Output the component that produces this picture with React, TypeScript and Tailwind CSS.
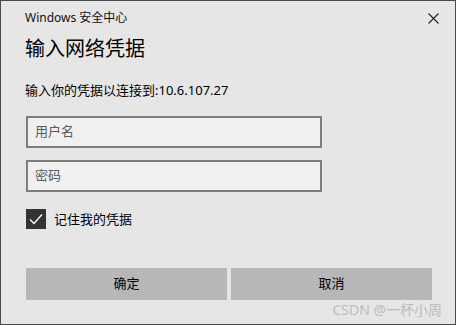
export default function App() {
  const font = { fontFamily: '"Noto Sans", "Noto Sans CJK SC", sans-serif' };
  return (
    <div
      className="relative w-[456px] h-[325px] bg-[#e6e6e6] border border-[#4a4a4a] text-black flex flex-col"
      style={font}
    >
      {/* Title bar */}
      <div className="flex items-center justify-between pl-[24px] pr-[16px] pt-[7px] h-[26px]">
        <span className="text-[12px] leading-[16px] text-[#111]">Windows 安全中心</span>
        <svg width="11" height="11" viewBox="0 0 11 11" fill="none" className="mt-[2px]">
          <path d="M0.5 0.5 L10.5 10.5 M10.5 0.5 L0.5 10.5" stroke="#222" strokeWidth="1.1" />
        </svg>
      </div>

      {/* Heading */}
      <div className="pl-[24px] mt-[8px] text-[20px] leading-[28px]">输入网络凭据</div>

      <div className="pl-[24px] mt-[18px] text-[13px] leading-[18px]">输入你的凭据以连接到:10.6.107.27</div>

      {/* Inputs */}
      <div className="pl-[25px] mt-[17px] flex flex-col gap-[12px]">
        <div className="w-[296px] h-[32px] bg-[#f0f0f0] border-2 border-[#7d7d7d] flex items-center pl-[7px] text-[13px] text-[#5a5a5a]">
          用户名
        </div>
        <div className="w-[296px] h-[32px] bg-[#f0f0f0] border-2 border-[#7d7d7d] flex items-center pl-[7px] text-[13px] text-[#5a5a5a]">
          密码
        </div>
      </div>

      {/* Remember */}
      <div className="pl-[25px] mt-[17px] flex items-center gap-[8px]">
        <div className="w-[20px] h-[20px] bg-[#333] flex items-center justify-center">
          <svg width="16" height="16" viewBox="0 0 16 16" fill="none">
            <path d="M2 8.5 L6 12.5 L14 3.5" stroke="#fff" strokeWidth="1.3" />
          </svg>
        </div>
        <span className="text-[13px] leading-[18px]">记住我的凭据</span>
      </div>

      {/* Buttons */}
      <div className="pl-[25px] mt-[39px] flex gap-[4px]">
        <button className="w-[201px] h-[32px] bg-[#b7b7b7] text-[13px]">确定</button>
        <button className="w-[201px] h-[32px] bg-[#b7b7b7] text-[13px]">取消</button>
      </div>

      <div className="absolute right-[13px] bottom-[6px] text-[14px] leading-[16px] text-[#bdbdbd]">
        CSDN @一杯小周
      </div>
    </div>
  );
}
